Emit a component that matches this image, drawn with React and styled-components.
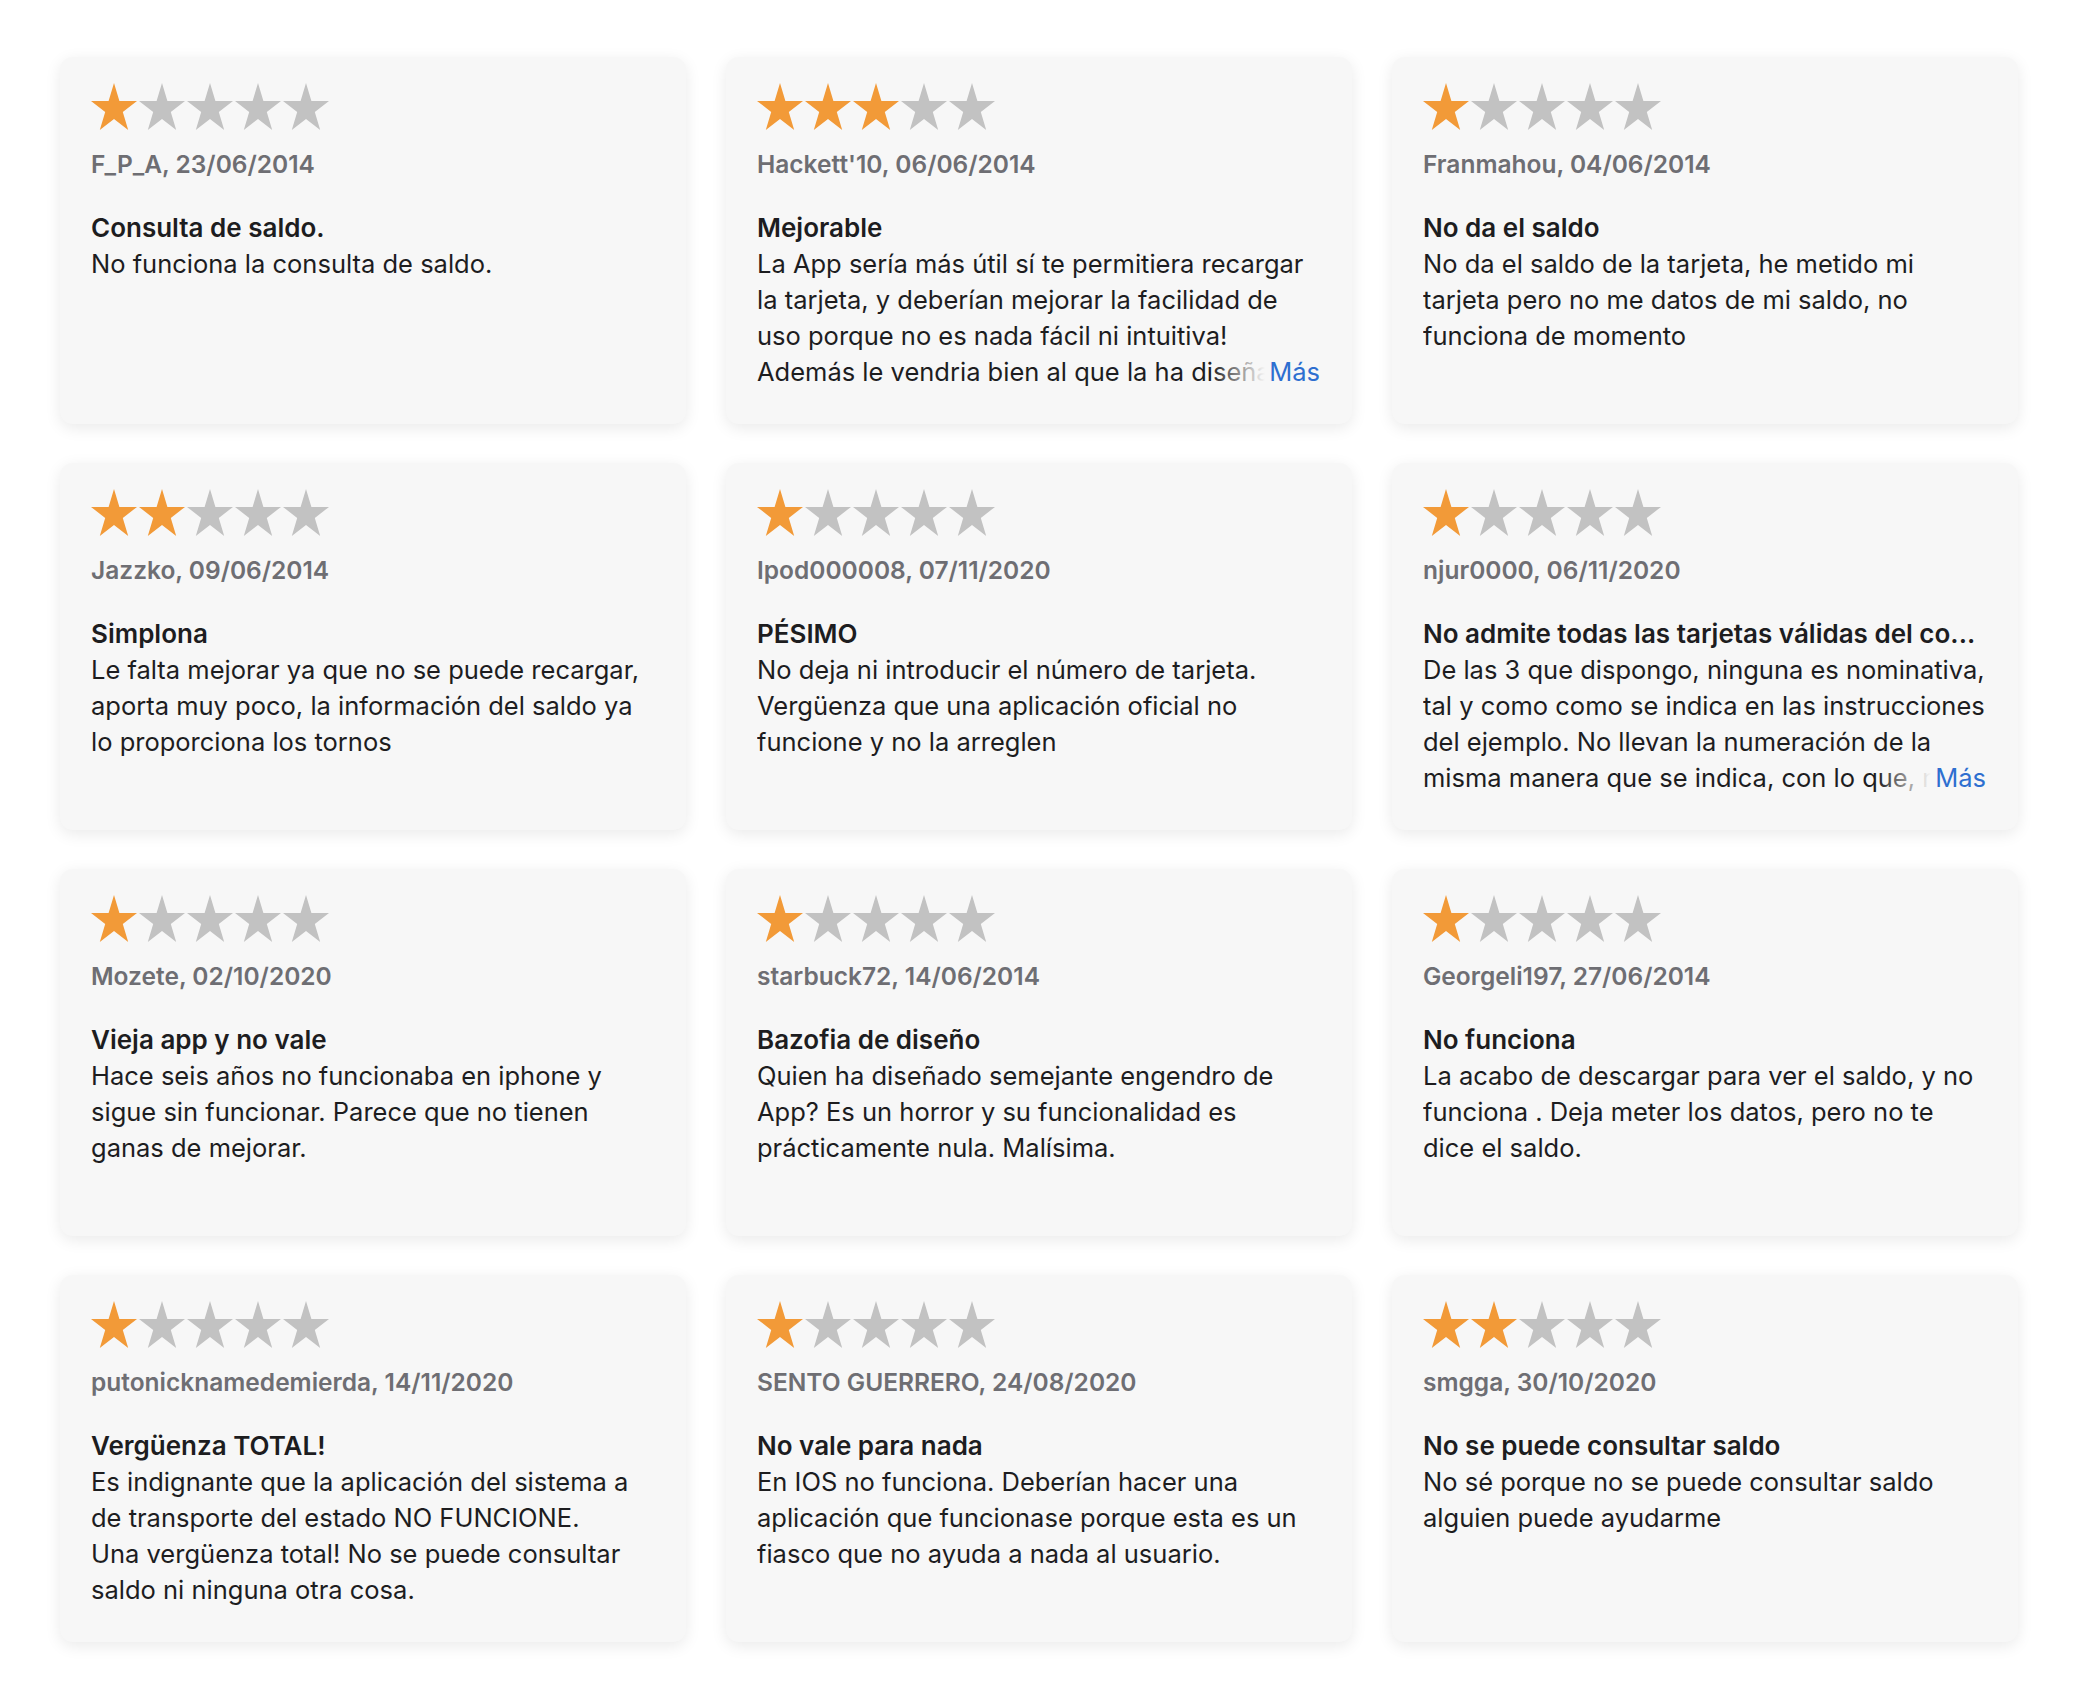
import React from "react"
import styled, { createGlobalStyle } from "styled-components"

const GlobalStyle = createGlobalStyle`
  body {
    margin: 0;
    background: #fff;
    font-family: "Inter", "Liberation Sans", sans-serif;
    -webkit-font-smoothing: antialiased;
  }
`

const reviews = [
  { rating: 1, author: "F_P_A, 23/06/2014", title: "Consulta de saldo.", body: "No funciona la consulta de saldo." },
  { rating: 3, author: "Hackett'10, 06/06/2014", title: "Mejorable", more: true,
    body: "La App sería más útil sí te permitiera recargar la tarjeta, y deberían mejorar la facilidad de uso porque no es nada fácil ni intuitiva! Además le vendria bien al que la ha diseñado un curso de usabilidad." },
  { rating: 1, author: "Franmahou, 04/06/2014", title: "No da el saldo",
    body: "No da el saldo de la tarjeta, he metido mi tarjeta pero no me datos de mi saldo, no funciona de momento" },
  { rating: 2, author: "Jazzko, 09/06/2014", title: "Simplona",
    body: "Le falta mejorar ya que no se puede recargar, aporta muy poco, la información del saldo ya lo proporciona los tornos" },
  { rating: 1, author: "Ipod000008, 07/11/2020", title: "PÉSIMO",
    body: "No deja ni introducir el número de tarjeta. Vergüenza que una aplicación oficial no funcione y no la arreglen" },
  { rating: 1, author: "njur0000, 06/11/2020", title: "No admite todas las tarjetas válidas del co...", more: true,
    body: "De las 3 que dispongo, ninguna es nominativa, tal y como como se indica en las instrucciones del ejemplo. No llevan la numeración de la misma manera que se indica, con lo que, no puedo consultar el saldo de ninguna." },
  { rating: 1, author: "Mozete, 02/10/2020", title: "Vieja app y no vale",
    body: "Hace seis años no funcionaba en iphone y sigue sin funcionar. Parece que no tienen ganas de mejorar." },
  { rating: 1, author: "starbuck72, 14/06/2014", title: "Bazofia de diseño",
    body: "Quien ha diseñado semejante engendro de App? Es un horror y su funcionalidad es prácticamente nula. Malísima." },
  { rating: 1, author: "Georgeli197, 27/06/2014", title: "No funciona",
    body: "La acabo de descargar para ver el saldo, y no funciona . Deja meter los datos, pero no te dice el saldo." },
  { rating: 1, author: "putonicknamedemierda, 14/11/2020", title: "Vergüenza TOTAL!",
    body: "Es indignante que la aplicación del sistema a de transporte del estado NO FUNCIONE.\nUna vergüenza total! No se puede consultar saldo ni ninguna otra cosa." },
  { rating: 1, author: "SENTO GUERRERO, 24/08/2020", title: "No vale para nada",
    body: "En IOS no funciona. Deberían hacer una aplicación que funcionase porque esta es un fiasco que no ayuda a nada al usuario." },
  { rating: 2, author: "smgga, 30/10/2020", title: "No se puede consultar saldo",
    body: "No sé porque no se puede consultar saldo alguien puede ayudarme" },
]

const Star = ({ filled }) => (
  <StarIcon width="46" height="47" viewBox="0 0 46 47" $filled={filled}>
    <polygon points="23,0 28.4,17.9 46,17.9 31.8,29 37.2,47 23,35.9 8.8,47 14.2,29 0,17.9 17.6,17.9" />
  </StarIcon>
)

const Review = ({ rating, author, title, body, more }) => (
  <Card>
    <Stars>
      {[1, 2, 3, 4, 5].map(i => <Star key={i} filled={i <= rating} />)}
    </Stars>
    <Author>{author}</Author>
    <Title>{title}</Title>
    <Body>
      {body}
      {more && <More>Más</More>}
    </Body>
  </Card>
)

const App = () => (
  <>
    <GlobalStyle />
    <Grid>
      {reviews.map((r, i) => <Review key={i} {...r} />)}
    </Grid>
  </>
)

const Grid = styled.main`
  display: grid;
  grid-template-columns: repeat(3, 1fr);
  column-gap: 40px;
  row-gap: 39px;
  padding: 57px 60px;
`

const Card = styled.article`
  height: 367px;
  box-sizing: border-box;
  padding: 26px 29px 0 31px;
  background: #f7f7f7;
  border-radius: 13px;
  box-shadow: 0 4px 16px rgba(0, 0, 0, 0.085);
  display: flex;
  flex-direction: column;
`

const Stars = styled.div`
  display: flex;
  gap: 2px;
  height: 47px;
`

const StarIcon = styled.svg`
  display: block;
  fill: ${p => (p.$filled ? "#f29a38" : "#c2c2c2")};
`

const Author = styled.div`
  margin-top: 16px;
  font-size: 24.5px;
  line-height: 36px;
  font-weight: 600;
  color: #6e6e73;
`

const Title = styled.h3`
  margin: 28px 0 0;
  font-size: 26px;
  line-height: 36px;
  font-weight: 600;
  color: #1d1d1f;
  white-space: nowrap;
  overflow: hidden;
  text-overflow: ellipsis;
`

const Body = styled.p`
  position: relative;
  margin: 0;
  font-size: 25.5px;
  line-height: 36px;
  color: #1d1d1f;
  white-space: pre-line;
  max-height: 144px;
  overflow: hidden;
`

const More = styled.span`
  position: absolute;
  right: 0;
  bottom: 0;
  padding: 0 3px 0 58px;
  color: #2e6fd0;
  background: linear-gradient(to right, rgba(247, 247, 247, 0), #f7f7f7 54px);
`

export default App
